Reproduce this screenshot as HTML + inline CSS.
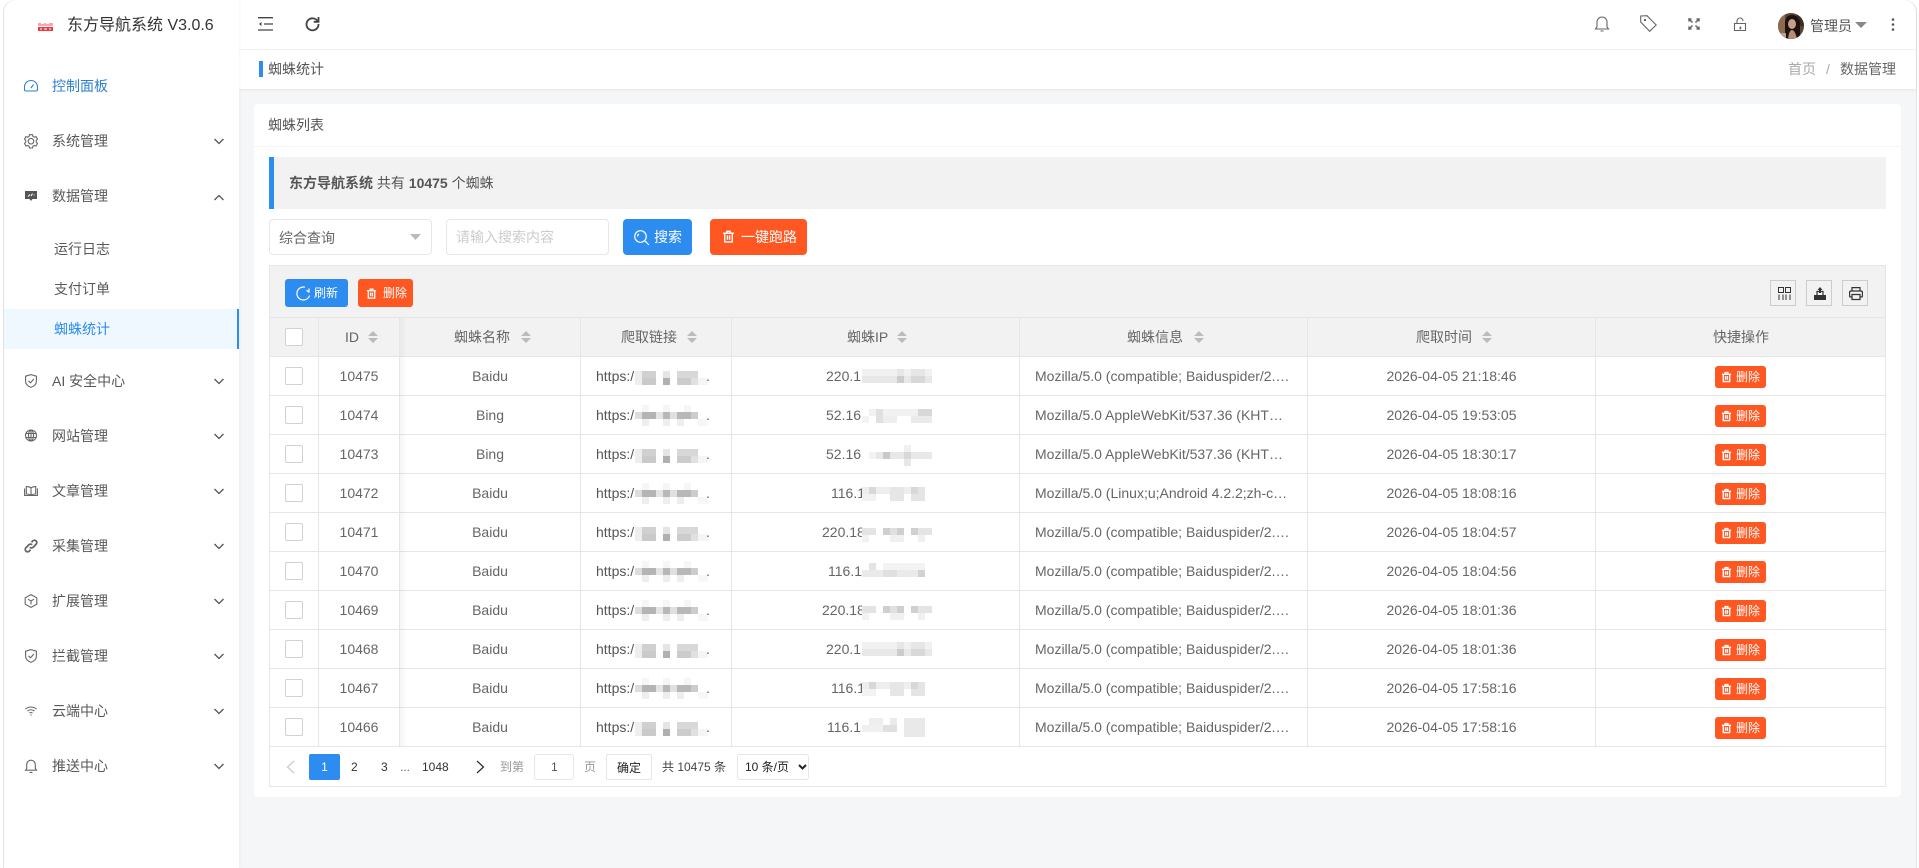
<!DOCTYPE html>
<html lang="zh-CN">
<head>
<meta charset="utf-8">
<title>蜘蛛统计</title>
<style>
*{box-sizing:border-box}
html,body{margin:0;padding:0;width:1919px;height:868px;overflow:hidden;background:#fff}
body{position:relative;font-family:"Liberation Sans","WenQuanYi Zen Hei","Noto Sans CJK SC",sans-serif;font-size:14px;color:#666}
#frame{position:absolute;left:3px;top:0;width:1914px;height:880px;border:1px solid #e4e4e4;border-bottom:0;border-radius:12px 12px 0 0;overflow:hidden;background:#f4f6f8}
.b{position:absolute}
.t{position:absolute;white-space:nowrap;line-height:20px}
svg.i{position:absolute;overflow:visible;fill:none;stroke:#666;stroke-width:1.1}
.nav{color:#595959}
.btn{position:absolute;border-radius:3px;color:#fff;white-space:nowrap}
.blue{background:#2d8cf0}
.red{background:#ff5722}
table{position:absolute;left:269px;top:317px;width:1617px;border-collapse:separate;border-spacing:0;table-layout:fixed;border-left:1px solid #e6e6e6;border-right:1px solid #e6e6e6;border-top:1px solid #e6e6e6}
th,td{border-bottom:1px solid #e6e6e6;border-right:1px solid #e6e6e6;padding:0;font-weight:400;overflow:hidden;white-space:nowrap;text-align:center}
tr th:last-child,tr td:last-child{border-right:0}
th{height:39px;background:#f2f2f2}
td{height:39px;background:#fff;color:#666}
td.l{text-align:left;padding:0 15px;text-overflow:ellipsis}
td.u{color:#555}
.cb{display:inline-block;width:18px;height:18px;border:1px solid #d2d2d2;border-radius:2px;background:#fff;vertical-align:middle}
.del{display:inline-block;width:51px;height:22px;border-radius:3px;background:#ff5722;color:#fff;font-size:12px;line-height:22px;vertical-align:middle;position:relative;top:1px;text-align:left;padding-left:21px}
.del svg{position:absolute;left:6px;top:5px;width:11px;height:12px;fill:none;stroke:#fff;stroke-width:1.500}
.s{position:absolute;top:331px;width:10px;height:12px}
.box{position:absolute;background:#fff;border:1px solid #e6e6e6;border-radius:3px}
</style>
</head>
<body>
<div id="frame"></div>

<!-- main area header -->
<div class="b" style="left:239px;top:0;width:1677px;height:89px;background:#fff;border-radius:0 12px 0 0;box-shadow:0 1px 3px rgba(0,0,0,.07)"></div>
<div class="b" style="left:239px;top:49px;width:1677px;height:1px;background:#f2f2f2"></div>

<!-- sidebar -->
<div class="b" style="left:4px;top:0;width:235px;height:868px;background:#fff;border-radius:12px 0 0 0;box-shadow:1px 0 3px rgba(0,0,0,.04)"></div>
<div class="b" style="left:4px;top:309px;width:235px;height:40px;background:#f0f8ff"></div>
<div class="b" style="left:237px;top:309px;width:2px;height:40px;background:#2d8cf0"></div>

<svg class="b" style="left:38px;top:23px" width="15" height="8"><rect width="15" height="3" fill="#f7a5a8"/><rect y="4" width="15" height="4" fill="#ea3a45"/><path d="M3 .5h3M8 .5h3M2 6h2M6 6h3M11 6h2" stroke="#fff" stroke-width="1"/></svg>
<div class="t" style="left:67px;top:16px;font-size:16px;color:#333">东方导航系统 V3.0.6</div>

<!-- sidebar icons -->
<svg class="i" style="left:24px;top:80px;stroke:#2d7fd0" width="14" height="12" viewBox="0 0 14 12"><path d="M2 11h10q1.500 0 1.500-1.500V7A6.500 6.500 0 0 0 .5 7v2.500Q.5 11 2 11zM7 8l2.500-3.500"/></svg>
<svg class="i" style="left:24px;top:134px" width="14" height="14" viewBox="0 0 14 14"><path d="M5.500.7h3l.4 1.700 1.500.8 1.700-.5 1.400 2.500-1.200 1.300v1.700l1.200 1.300-1.400 2.500-1.700-.5-1.500.8-.4 1.700h-3l-.4-1.700-1.500-.8-1.700.5L.5 9.500l1.200-1.300V6.500L.5 5.200l1.400-2.500 1.700.5 1.500-.8z"/><circle cx="7" cy="7.200" r="2.800"/></svg>
<svg class="b" style="left:25px;top:191px" width="12" height="10" viewBox="0 0 12 10"><path d="M0 0h12v8H7.500L6 10 4.500 8H0z" fill="#555"/><path d="M3 5.500l2-2M6 5l1.500-2.500M8.500 4h1" stroke="#fff" fill="none"/></svg>
<svg class="i" style="left:25px;top:374px" width="12" height="14" viewBox="0 0 12 14"><path d="M6 .6l5.400 1.600v5c0 3-2.400 5-5.400 6.200C3 12.200.6 10.200.6 7.200v-5zM3.500 6.800L5.500 8.800 8.800 5"/></svg>
<svg class="i" style="left:25px;top:429px" width="12" height="13" viewBox="0 0 12 13"><circle cx="6" cy="6.500" r="5.500"/><ellipse cx="6" cy="6.500" rx="2.500" ry="5.500"/><path d="M.5 4.500h11M.5 8.500h11M6 1v11"/></svg>
<svg class="i" style="left:24px;top:486px" width="14" height="10" viewBox="0 0 14 10"><path d="M.6 2.500v7h5.900q.5-.7 1 0h5.900v-7M2.300 8V.6Q5.500.6 7 2q1.500-1.400 4.700-1.400V8Q8.500 8 7 9.300 5.500 8 2.300 8zM7 2v7"/></svg>
<svg class="i" style="left:24px;top:539px;stroke-width:1.800" width="14" height="14" viewBox="0 0 14 14"><path d="M5.800 8.200a2.300 2.300 0 0 0 3.300 0l3-3a2.300 2.300 0 0 0-3.300-3.300L7.500 3.200M8.200 5.800a2.300 2.300 0 0 0-3.300 0l-3 3a2.300 2.300 0 0 0 3.300 3.300l1.300-1.300"/></svg>
<svg class="i" style="left:24px;top:594px" width="14" height="14" viewBox="0 0 14 14"><path d="M7 .6l5.800 3.200v6.400L7 13.400 1.200 10.200V3.800zM4 5.200L7 7l3-1.800M7 7v3.500"/></svg>
<svg class="i" style="left:25px;top:649px" width="12" height="14" viewBox="0 0 12 14"><path d="M6 .6l5.400 1.600v5c0 3-2.400 5-5.400 6.200C3 12.200.6 10.200.6 7.200v-5zM3.500 6.800L5.500 8.800 8.800 5"/></svg>
<svg class="i" style="left:25px;top:706px" width="12" height="10" viewBox="0 0 12 10"><path d="M.5 3q5.500-4 11 0M2.500 5q3.500-2.500 7 0M4.500 7q1.500-1 3 0M5.300 9h1.400"/></svg>
<svg class="i" style="left:25px;top:759px" width="12" height="14" viewBox="0 0 12 14"><path d="M.5 11.200h11l-1.200-1.700V5.500a4.300 4.300 0 0 0-8.600 0v4l-1.200 1.700zM4.500 13.400h3"/></svg>

<!-- sidebar text -->
<div class="t" style="left:52px;top:76px;color:#2d7fd0">控制面板</div>
<div class="t nav" style="left:52px;top:131px">系统管理</div>
<div class="t nav" style="left:52px;top:186px">数据管理</div>
<div class="t nav" style="left:54px;top:239px">运行日志</div>
<div class="t nav" style="left:54px;top:279px">支付订单</div>
<div class="t" style="left:54px;top:319px;color:#2d8cf0">蜘蛛统计</div>
<div class="t nav" style="left:52px;top:371px">AI 安全中心</div>
<div class="t nav" style="left:52px;top:426px">网站管理</div>
<div class="t nav" style="left:52px;top:481px">文章管理</div>
<div class="t nav" style="left:52px;top:536px">采集管理</div>
<div class="t nav" style="left:52px;top:591px">扩展管理</div>
<div class="t nav" style="left:52px;top:646px">拦截管理</div>
<div class="t nav" style="left:52px;top:701px">云端中心</div>
<div class="t nav" style="left:52px;top:756px">推送中心</div>

<svg class="b" style="left:0;top:0" width="240" height="868" fill="none" stroke="#555" stroke-width="1.300"><path d="M214.500 139l4.500 4.500 4.500-4.500M214.500 200l4.500-4.500 4.500 4.500M214.500 379l4.500 4.500 4.500-4.500M214.500 434l4.500 4.500 4.500-4.500M214.500 489l4.500 4.500 4.500-4.500M214.500 544l4.500 4.500 4.500-4.500M214.500 599l4.500 4.500 4.500-4.500M214.500 654l4.500 4.500 4.500-4.500M214.500 709l4.500 4.500 4.500-4.500M214.500 764l4.500 4.500 4.500-4.500"/></svg>

<!-- top bar icons -->
<svg class="i" style="left:258px;top:17px;stroke:#444;stroke-width:1.300" width="15" height="14" viewBox="0 0 15 14"><path d="M0 .7h15M0 13h15M6 7h9"/><path d="M3.500 5L1 7l2.500 2z" fill="#444" stroke="none"/></svg>
<svg class="i" style="left:305px;top:16px;stroke:#444;stroke-width:1.800" width="15" height="15" viewBox="0 0 15 15"><path d="M12.800 5.500A6 6 0 1 0 13.500 8"/><path d="M13.500 1v4.800H8.700" fill="none"/></svg>
<div class="b" style="left:259px;top:61px;width:4px;height:16px;background:#2d8cf0"></div>
<div class="t" style="left:268px;top:59px;color:#555">蜘蛛统计</div>

<svg class="i" style="left:1595px;top:16px" width="14" height="16" viewBox="0 0 14 16"><path d="M.5 13h13l-1.500-2V6a5 5 0 0 0-10 0v5zM5.500 15h3M7 .5v1"/></svg>
<svg class="i" style="left:1640px;top:15px" width="17" height="17" viewBox="0 0 17 17"><path d="M.7 1v6l9 9.300 6.500-6.300L7 .7zM4.500 4.500h1v1h-1z"/></svg>
<svg class="i" style="left:1688px;top:18px;stroke-width:1.500" width="12" height="12" viewBox="0 0 12 12"><path d="M4.500 4.500L1 1M1 3.500V1h2.500M7.500 4.500L11 1M8.500 1H11v2.500M4.500 7.500L1 11M1 8.500V11h2.500M7.500 7.500L11 11M11 8.500V11H8.500"/></svg>
<svg class="i" style="left:1734px;top:18px" width="12" height="13" viewBox="0 0 12 13"><path d="M.5 5.500h11v7H.5zM3 5.500V3a3 3 0 0 1 6 0"/><path d="M6.500 8.500v1.800L5.500 11" stroke-width="1.500"/></svg>
<svg class="b" style="left:1778px;top:13px" width="26" height="26" viewBox="0 0 26 26"><defs><clipPath id="av"><circle cx="13" cy="13" r="13"/></clipPath></defs><g clip-path="url(#av)"><rect width="26" height="26" fill="#5a4335"/><rect x="0" y="0" width="7" height="26" fill="#8d6b4e"/><rect x="19" y="0" width="7" height="13" fill="#3d2c24"/><path d="M7 26V9Q8 2 14 2t8 7v17z" fill="#1b1210"/><ellipse cx="14" cy="11" rx="4" ry="5" fill="#c89d87"/><path d="M10 26q1-9 4-9t5 9z" fill="#b98a76"/><rect x="0" y="20" width="8" height="6" fill="#b8a08a"/></g></svg>
<div class="t" style="left:1810px;top:16px;color:#555">管理员</div>
<svg class="b" style="left:1855px;top:22px" width="12" height="6"><path d="M0 0h12L6 6z" fill="#888"/></svg>
<svg class="b" style="left:1891px;top:18px" width="4" height="13"><circle cx="2" cy="1.500" r="1.300" fill="#555"/><circle cx="2" cy="6.500" r="1.300" fill="#555"/><circle cx="2" cy="11.500" r="1.300" fill="#555"/></svg>

<div class="t" style="left:1788px;top:59px;color:#aaa">首页</div>
<div class="t" style="left:1826px;top:59px;color:#aaa">/</div>
<div class="t" style="left:1840px;top:59px;color:#666">数据管理</div>

<!-- card -->
<div class="b" style="left:254px;top:104px;width:1647px;height:693px;background:#fff;border-radius:4px"></div>
<div class="b" style="left:254px;top:146px;width:1647px;height:1px;background:#f6f6f6"></div>
<div class="t" style="left:268px;top:115px;color:#555">蜘蛛列表</div>

<div class="b" style="left:269px;top:157px;width:1617px;height:52px;background:#f2f2f2;border-left:5px solid #2d8cf0"></div>
<div class="t" style="left:289px;top:173px;color:#555"><b>东方导航系统</b> 共有 <b>10475</b> 个蜘蛛</div>

<div class="box" style="left:269px;top:219px;width:163px;height:36px;border-radius:4px"></div>
<div class="t" style="left:279px;top:228px;color:#666">综合查询</div>
<svg class="b" style="left:410px;top:234px" width="11" height="6"><path d="M0 0h11L5.500 6z" fill="#bbb"/></svg>
<div class="box" style="left:446px;top:219px;width:163px;height:36px;border-radius:4px"></div>
<div class="t" style="left:456px;top:227px;color:#ccc">请输入搜索内容</div>

<div class="btn blue" style="left:623px;top:219px;width:69px;height:36px;border-radius:4px"></div>
<svg class="i" style="left:634px;top:230px;stroke:#fff;stroke-width:1.200" width="16" height="16" viewBox="0 0 16 16"><circle cx="6.500" cy="6.500" r="5.800"/><path d="M10.800 10.800l4.200 4.200M3.500 6.500a3 3 0 0 1 1.500-2.500"/></svg>
<div class="t" style="left:654px;top:227px;color:#fff">搜索</div>
<div class="btn red" style="left:710px;top:219px;width:97px;height:36px;border-radius:4px"></div>
<svg class="i" style="left:722px;top:230px;stroke:#fff;stroke-width:1.300" width="13" height="13" viewBox="0 0 12 12"><path d="M1 3h10M4.500 3V1.200h3V3M2.500 3v8h7V3M5 5v4M7 5v4"/></svg>
<div class="t" style="left:741px;top:227px;color:#fff">一键跑路</div>

<!-- toolbar -->
<div class="b" style="left:269px;top:265px;width:1617px;height:53px;background:#f2f2f2;border:1px solid #e6e6e6"></div>
<div class="btn blue" style="left:285px;top:279px;width:63px;height:28px;border-radius:3px"></div>
<svg class="i" style="left:296px;top:286px;stroke:#fff;stroke-width:1.200" width="15" height="15" viewBox="0 0 15 15"><path d="M13 2.500v4M13.600 9.500A6.500 6.500 0 1 1 9 1.200M13 6.500L10.500 4"/></svg>
<div class="t" style="left:314px;top:283px;color:#fff;font-size:12px">刷新</div>
<div class="btn red" style="left:358px;top:279px;width:55px;height:28px;border-radius:3px"></div>
<svg class="i" style="left:366px;top:288px;stroke:#fff;stroke-width:1.400" width="11" height="11" viewBox="0 0 12 12"><path d="M1 3h10M4.500 3V1.200h3V3M2.500 3v8h7V3M5 5v4M7 5v4"/></svg>
<div class="t" style="left:383px;top:283px;color:#fff;font-size:12px">删除</div>

<div class="b" style="left:1770px;top:280px;width:26px;height:26px;border:1px solid #ccc"></div>
<div class="b" style="left:1806px;top:280px;width:26px;height:26px;border:1px solid #ccc"></div>
<div class="b" style="left:1842px;top:280px;width:26px;height:26px;border:1px solid #ccc"></div>
<svg class="i" style="left:1778px;top:287px;stroke:#333;stroke-width:1" width="13" height="13" viewBox="0 0 13 13"><path d="M.5.500h5v5h-5zM7.500.500h5v5h-5zM1 7.500V13M5 7.500V13M8 7.500V13M12 7.500V13"/></svg>
<svg class="b" style="left:1814px;top:287px" width="12" height="13" viewBox="0 0 12 13"><path d="M0 8h12v5H0z" fill="#333"/><path d="M3 8V4.500h6V8" fill="none" stroke="#333" stroke-width="1.200"/><path d="M6 0l2.500 3H7v3H5V3H3.500z" fill="#333"/></svg>
<svg class="i" style="left:1849px;top:287px;stroke:#333;stroke-width:1.200" width="14" height="13" viewBox="0 0 14 13"><path d="M3 4V.6h8V4M3 10H1.500Q.6 10 .6 9V5.500Q.6 4 2 4h10q1.400 0 1.400 1.500V9q0 1-.9 1H11M3 7.500h8v5H3z"/></svg>

<!-- table -->
<table>
<colgroup><col style="width:49px"><col style="width:81px"><col style="width:181px"><col style="width:151px"><col style="width:288px"><col style="width:288px"><col style="width:288px"><col></colgroup>
<tr><th><span class="cb"></span></th><th></th><th></th><th></th><th></th><th></th><th></th><th></th></tr>
<tr><td><span class="cb"></span></td><td>10475</td><td>Baidu</td><td class="l u">https:/</td><td class="l" style="padding-left:94px">220.1</td><td class="l">Mozilla/5.0 (compatible; Baiduspider/2.0; +baidu/search/spider)</td><td>2026-04-05 21:18:46</td><td><span class="del"><svg viewBox="0 0 12 12"><path d="M1 3h10M4.500 3V1.200h3V3M2.500 3v8h7V3M5 5v4M7 5v4"/></svg>删除</span></td></tr>
<tr><td><span class="cb"></span></td><td>10474</td><td>Bing</td><td class="l u">https:/</td><td class="l" style="padding-left:94px">52.16</td><td class="l">Mozilla/5.0 AppleWebKit/537.36 (KHTML, like Gecko; compatible; bingbot/2.0)</td><td>2026-04-05 19:53:05</td><td><span class="del"><svg viewBox="0 0 12 12"><path d="M1 3h10M4.500 3V1.200h3V3M2.500 3v8h7V3M5 5v4M7 5v4"/></svg>删除</span></td></tr>
<tr><td><span class="cb"></span></td><td>10473</td><td>Bing</td><td class="l u">https:/</td><td class="l" style="padding-left:94px">52.16</td><td class="l">Mozilla/5.0 AppleWebKit/537.36 (KHTML, like Gecko; compatible; bingbot/2.0)</td><td>2026-04-05 18:30:17</td><td><span class="del"><svg viewBox="0 0 12 12"><path d="M1 3h10M4.500 3V1.200h3V3M2.500 3v8h7V3M5 5v4M7 5v4"/></svg>删除</span></td></tr>
<tr><td><span class="cb"></span></td><td>10472</td><td>Baidu</td><td class="l u">https:/</td><td class="l" style="padding-left:99px">116.1</td><td class="l">Mozilla/5.0 (Linux;u;Android 4.2.2;zh-cn;) AppleWebKit/534.46</td><td>2026-04-05 18:08:16</td><td><span class="del"><svg viewBox="0 0 12 12"><path d="M1 3h10M4.500 3V1.200h3V3M2.500 3v8h7V3M5 5v4M7 5v4"/></svg>删除</span></td></tr>
<tr><td><span class="cb"></span></td><td>10471</td><td>Baidu</td><td class="l u">https:/</td><td class="l" style="padding-left:90px">220.18</td><td class="l">Mozilla/5.0 (compatible; Baiduspider/2.0; +baidu/search/spider)</td><td>2026-04-05 18:04:57</td><td><span class="del"><svg viewBox="0 0 12 12"><path d="M1 3h10M4.500 3V1.200h3V3M2.500 3v8h7V3M5 5v4M7 5v4"/></svg>删除</span></td></tr>
<tr><td><span class="cb"></span></td><td>10470</td><td>Baidu</td><td class="l u">https:/</td><td class="l" style="padding-left:96px">116.1</td><td class="l">Mozilla/5.0 (compatible; Baiduspider/2.0; +baidu/search/spider)</td><td>2026-04-05 18:04:56</td><td><span class="del"><svg viewBox="0 0 12 12"><path d="M1 3h10M4.500 3V1.200h3V3M2.500 3v8h7V3M5 5v4M7 5v4"/></svg>删除</span></td></tr>
<tr><td><span class="cb"></span></td><td>10469</td><td>Baidu</td><td class="l u">https:/</td><td class="l" style="padding-left:90px">220.18</td><td class="l">Mozilla/5.0 (compatible; Baiduspider/2.0; +baidu/search/spider)</td><td>2026-04-05 18:01:36</td><td><span class="del"><svg viewBox="0 0 12 12"><path d="M1 3h10M4.500 3V1.200h3V3M2.500 3v8h7V3M5 5v4M7 5v4"/></svg>删除</span></td></tr>
<tr><td><span class="cb"></span></td><td>10468</td><td>Baidu</td><td class="l u">https:/</td><td class="l" style="padding-left:94px">220.1</td><td class="l">Mozilla/5.0 (compatible; Baiduspider/2.0; +baidu/search/spider)</td><td>2026-04-05 18:01:36</td><td><span class="del"><svg viewBox="0 0 12 12"><path d="M1 3h10M4.500 3V1.200h3V3M2.500 3v8h7V3M5 5v4M7 5v4"/></svg>删除</span></td></tr>
<tr><td><span class="cb"></span></td><td>10467</td><td>Baidu</td><td class="l u">https:/</td><td class="l" style="padding-left:99px">116.1</td><td class="l">Mozilla/5.0 (compatible; Baiduspider/2.0; +baidu/search/spider)</td><td>2026-04-05 17:58:16</td><td><span class="del"><svg viewBox="0 0 12 12"><path d="M1 3h10M4.500 3V1.200h3V3M2.500 3v8h7V3M5 5v4M7 5v4"/></svg>删除</span></td></tr>
<tr><td><span class="cb"></span></td><td>10466</td><td>Baidu</td><td class="l u">https:/</td><td class="l" style="padding-left:95px">116.1</td><td class="l">Mozilla/5.0 (compatible; Baiduspider/2.0; +baidu/search/spider)</td><td>2026-04-05 17:58:16</td><td><span class="del"><svg viewBox="0 0 12 12"><path d="M1 3h10M4.500 3V1.200h3V3M2.500 3v8h7V3M5 5v4M7 5v4"/></svg>删除</span></td></tr>
</table>
<div class="b" style="left:400px;top:318px;width:7px;height:429px;background:linear-gradient(90deg,rgba(0,0,0,.04),rgba(0,0,0,0))"></div>

<!-- header labels -->
<div class="t" style="left:345px;top:327px">ID</div>
<div class="t" style="left:454px;top:327px">蜘蛛名称</div>
<div class="t" style="left:621px;top:327px">爬取链接</div>
<div class="t" style="left:847px;top:327px">蜘蛛IP</div>
<div class="t" style="left:1127px;top:327px">蜘蛛信息</div>
<div class="t" style="left:1416px;top:327px">爬取时间</div>
<div class="t" style="left:1713px;top:327px">快捷操作</div>
<svg class="s" style="left:368px" viewBox="0 0 10 12"><path d="M5 0l5 5H0zM0 7h10l-5 5z" fill="#bbb"/></svg>
<svg class="s" style="left:521px" viewBox="0 0 10 12"><path d="M5 0l5 5H0zM0 7h10l-5 5z" fill="#bbb"/></svg>
<svg class="s" style="left:687px" viewBox="0 0 10 12"><path d="M5 0l5 5H0zM0 7h10l-5 5z" fill="#bbb"/></svg>
<svg class="s" style="left:897px" viewBox="0 0 10 12"><path d="M5 0l5 5H0zM0 7h10l-5 5z" fill="#bbb"/></svg>
<svg class="s" style="left:1194px" viewBox="0 0 10 12"><path d="M5 0l5 5H0zM0 7h10l-5 5z" fill="#bbb"/></svg>
<svg class="s" style="left:1482px" viewBox="0 0 10 12"><path d="M5 0l5 5H0zM0 7h10l-5 5z" fill="#bbb"/></svg>

<!-- mosaics -->
<svg class="b" style="left:0;top:0" width="1919" height="868">
<defs>
<g id="ua"><rect x="635" y="364" width="73" height="26" fill="#fff"/><rect x="635" y="373" width="7" height="7" fill="#ddd"/><rect x="642" y="373" width="14" height="7" fill="#b4b4b4"/><rect x="656" y="373" width="7" height="7" fill="#e4e4e4"/><rect x="663" y="373" width="7" height="7" fill="#b8b8b8"/><rect x="670" y="373" width="7" height="7" fill="#e0e0e0"/><rect x="677" y="373" width="14" height="7" fill="#b8b8b8"/><rect x="691" y="373" width="7" height="7" fill="#ccc"/><rect x="642" y="380" width="7" height="7" fill="#eee"/><rect x="663" y="380" width="7" height="7" fill="#eee"/><rect x="677" y="380" width="7" height="7" fill="#eee"/><rect x="698" y="380" width="10" height="7" fill="#f7f7f7"/><rect x="642" y="366" width="7" height="7" fill="#f6f6f6"/><rect x="663" y="366" width="7" height="7" fill="#f6f6f6"/><rect x="684" y="366" width="7" height="7" fill="#f6f6f6"/></g>
<g id="ub"><rect x="635" y="364" width="73" height="26" fill="#fff"/><rect x="635" y="371" width="7" height="7" fill="#eee"/><rect x="642" y="371" width="14" height="7" fill="#d0d0d0"/><rect x="663" y="371" width="7" height="7" fill="#e5e5e5"/><rect x="677" y="371" width="21" height="7" fill="#d8d8d8"/><rect x="635" y="378" width="7" height="7" fill="#eee"/><rect x="642" y="378" width="14" height="7" fill="#cacaca"/><rect x="663" y="378" width="7" height="7" fill="#b0b0b0"/><rect x="677" y="378" width="14" height="7" fill="#ccc"/><rect x="691" y="378" width="7" height="7" fill="#e0e0e0"/><rect x="698" y="378" width="10" height="7" fill="#f5f5f5"/></g>
<g id="ia"><rect x="862" y="364" width="73" height="26" fill="#fff"/><rect x="862" y="369" width="70" height="7" fill="#f1f1f1"/><rect x="862" y="376" width="70" height="7" fill="#e8e8e8"/><rect x="897" y="376" width="7" height="7" fill="#ccc"/><rect x="911" y="376" width="14" height="7" fill="#d8d8d8"/><rect x="897" y="369" width="7" height="7" fill="#e6e6e6"/><rect x="911" y="369" width="14" height="7" fill="#e6e6e6"/></g>
<g id="ib"><rect x="862" y="364" width="73" height="26" fill="#fff"/><rect x="869" y="370" width="63" height="7" fill="#f1f1f1"/><rect x="876" y="370" width="7" height="14" fill="#e0e0e0"/><rect x="918" y="370" width="14" height="7" fill="#d8d8d8"/><rect x="862" y="377" width="7" height="7" fill="#f4f4f4"/><rect x="883" y="377" width="14" height="7" fill="#eee"/><rect x="911" y="377" width="21" height="7" fill="#eaeaea"/></g>
<g id="ic"><rect x="862" y="364" width="73" height="26" fill="#fff"/><rect x="869" y="374" width="7" height="7" fill="#f2f2f2"/><rect x="876" y="374" width="56" height="7" fill="#e8e8e8"/><rect x="883" y="374" width="7" height="7" fill="#c8c8c8"/><rect x="904" y="374" width="7" height="7" fill="#d8d8d8"/><rect x="904" y="367" width="7" height="7" fill="#f0f0f0"/><rect x="904" y="381" width="7" height="7" fill="#e8e8e8"/></g>
<g id="id"><rect x="862" y="364" width="73" height="26" fill="#fff"/><rect x="862" y="370" width="63" height="7" fill="#eeeeee"/><rect x="869" y="370" width="7" height="14" fill="#d8d8d8"/><rect x="890" y="370" width="14" height="14" fill="#e6e6e6"/><rect x="911" y="370" width="14" height="14" fill="#e4e4e4"/><rect x="862" y="377" width="14" height="7" fill="#f2f2f2"/><rect x="911" y="370" width="7" height="7" fill="#d8d8d8"/></g>
<g id="ie"><rect x="862" y="364" width="73" height="26" fill="#fff"/><rect x="862" y="372" width="14" height="7" fill="#e4e4e4"/><rect x="883" y="372" width="21" height="7" fill="#e0e0e0"/><rect x="883" y="372" width="7" height="7" fill="#cfcfcf"/><rect x="897" y="372" width="7" height="7" fill="#cfcfcf"/><rect x="911" y="372" width="21" height="7" fill="#e4e4e4"/><rect x="911" y="372" width="7" height="7" fill="#d0d0d0"/><rect x="862" y="379" width="7" height="7" fill="#f2f2f2"/><rect x="890" y="379" width="14" height="7" fill="#f0f0f0"/><rect x="918" y="379" width="7" height="7" fill="#f0f0f0"/></g>
<g id="if"><rect x="862" y="364" width="73" height="26" fill="#fff"/><rect x="869" y="368" width="7" height="7" fill="#e4e4e4"/><rect x="862" y="375" width="63" height="7" fill="#eaeaea"/><rect x="883" y="368" width="42" height="7" fill="#f3f3f3"/><rect x="918" y="375" width="7" height="7" fill="#d2d2d2"/><rect x="883" y="375" width="14" height="7" fill="#e0e0e0"/></g>
<g id="ig"><rect x="862" y="364" width="73" height="26" fill="#fff"/><rect x="869" y="367" width="14" height="14" fill="#eee"/><rect x="883" y="374" width="14" height="7" fill="#e0e0e0"/><rect x="890" y="367" width="7" height="7" fill="#eaeaea"/><rect x="904" y="367" width="21" height="19" fill="#e9e9e9"/><rect x="862" y="374" width="21" height="7" fill="#f0f0f0"/></g>
</defs>
<use href="#ub"/><use href="#ua" y="39"/><use href="#ub" y="78"/><use href="#ua" y="117"/><use href="#ub" y="156"/><use href="#ua" y="195"/><use href="#ua" y="234"/><use href="#ub" y="273"/><use href="#ua" y="312"/><use href="#ub" y="351"/>
<use href="#ia"/><use href="#ib" y="39"/><use href="#ic" y="78"/><use href="#id" y="117"/><use href="#ie" y="156"/><use href="#if" y="195"/><use href="#ie" y="234"/><use href="#ia" y="273"/><use href="#id" y="312"/><use href="#ig" y="351"/>
<text x="706" y="381" fill="#666" font-size="14" font-family="Liberation Sans">.</text>
<text x="706" y="420" fill="#666" font-size="14" font-family="Liberation Sans">.</text>
<text x="706" y="459" fill="#666" font-size="14" font-family="Liberation Sans">.</text>
<text x="706" y="498" fill="#666" font-size="14" font-family="Liberation Sans">.</text>
<text x="706" y="537" fill="#666" font-size="14" font-family="Liberation Sans">.</text>
<text x="706" y="576" fill="#666" font-size="14" font-family="Liberation Sans">.</text>
<text x="706" y="615" fill="#666" font-size="14" font-family="Liberation Sans">.</text>
<text x="706" y="654" fill="#666" font-size="14" font-family="Liberation Sans">.</text>
<text x="706" y="693" fill="#666" font-size="14" font-family="Liberation Sans">.</text>
<text x="706" y="732" fill="#666" font-size="14" font-family="Liberation Sans">.</text>
</svg>

<!-- pagination -->
<div class="b" style="left:269px;top:746px;width:1617px;height:41px;background:#fff;border:1px solid #e6e6e6"></div>
<svg class="i" style="left:286px;top:760px;stroke:#ccc;stroke-width:1.300" width="9" height="14"><path d="M8 1L1.500 7 8 13"/></svg>
<div class="b blue" style="left:309px;top:754px;width:31px;height:26px;border-radius:2px"></div>
<div class="t" style="left:309px;top:757px;width:31px;text-align:center;color:#fff;font-size:12px">1</div>
<div class="t" style="left:351px;top:757px;font-size:12px;color:#333">2</div>
<div class="t" style="left:381px;top:757px;font-size:12px;color:#333">3</div>
<div class="t" style="left:400px;top:757px;font-size:12px;color:#666">...</div>
<div class="t" style="left:422px;top:757px;font-size:12px;color:#333">1048</div>
<svg class="i" style="left:476px;top:760px;stroke:#333;stroke-width:1.300" width="9" height="14"><path d="M1 1l6.500 6L1 13"/></svg>
<div class="t" style="left:500px;top:757px;font-size:12px;color:#999">到第</div>
<div class="box" style="left:534px;top:754px;width:40px;height:26px"></div>
<div class="t" style="left:551px;top:757px;font-size:12px;color:#555">1</div>
<div class="t" style="left:584px;top:757px;font-size:12px;color:#999">页</div>
<div class="box" style="left:606px;top:754px;width:46px;height:26px;border-radius:2px"></div>
<div class="t" style="left:617px;top:758px;font-size:12px;color:#222">确定</div>
<div class="t" style="left:662px;top:757px;font-size:12px;color:#444">共 10475 条</div>
<div class="box" style="left:737px;top:754px;width:72px;height:26px"></div>
<div class="t" style="left:745px;top:757px;font-size:12px;color:#222">10 条/页</div>
<svg class="i" style="left:798px;top:764px;stroke:#222;stroke-width:2" width="9" height="6"><path d="M1 1l3.500 3.500L8 1"/></svg>
</body>
</html>
